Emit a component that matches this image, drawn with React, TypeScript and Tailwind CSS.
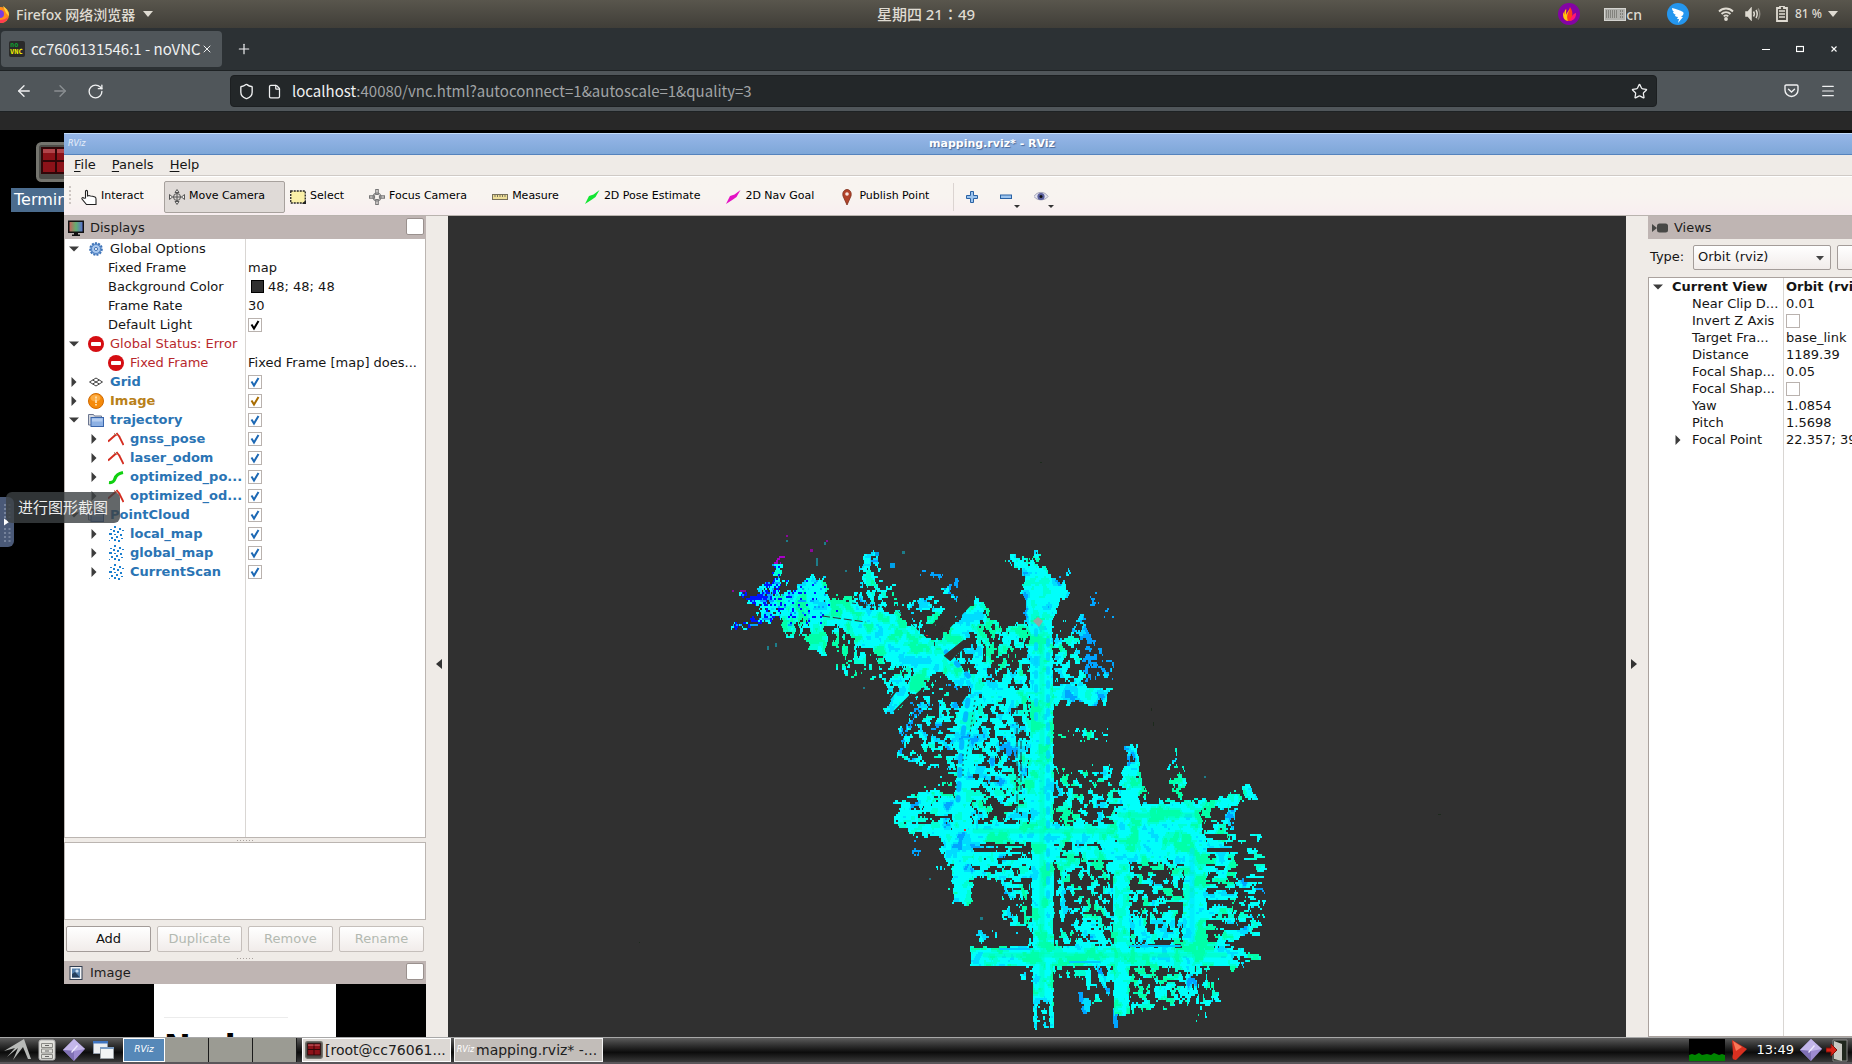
import React, { useMemo } from "react";
import { ArrowLeft, ArrowRight, RotateCw, Plus, X, Shield, File, Star, Menu } from "lucide-react";

const ui = "font-['Noto_Sans','Noto_Sans_CJK_SC',sans-serif]";
const web = "font-['Noto_Sans_CJK_SC',sans-serif]";
const qt = "font-['DejaVu_Sans',sans-serif]";

/* ---------- point cloud ---------- */

type Region = { p: number[]; d: number; tone?: number; sx?: number; sy?: number; warp?: number };

const regions: Region[] = [
  // north west road, running from the blue end to the main crossing
  { p: [776, 594, 787, 590, 812, 574, 826, 582, 828, 601, 853, 602, 896, 609, 928, 638, 948, 655, 977, 678, 1032, 688, 1032, 702, 990, 700, 960, 684, 940, 672, 916, 666, 886, 660, 866, 648, 842, 628, 800, 618, 776, 614], d: 0.95 },
  { p: [760, 586, 780, 580, 784, 616, 758, 622], d: 0.82, tone: 1, sx: 3, sy: 3 },
  { p: [788, 590, 812, 573, 825, 580, 827, 610, 788, 612], d: 0.82, tone: 1, sx: 3, sy: 3 },
  { p: [740, 592, 764, 596, 764, 606, 742, 600], d: 0.72, tone: 3, sx: 5, sy: 3 },
  { p: [764, 578, 786, 580, 782, 590, 764, 592], d: 0.62, tone: 3, sx: 3, sy: 3 },
  { p: [774, 556, 780, 556, 781, 584, 776, 584], d: 0.85, tone: 1, sx: 3, sy: 3 },
  { p: [727, 628, 740, 620, 770, 616, 770, 622, 740, 628], d: 0.6, tone: 3, sx: 5, sy: 2 },
  { p: [783, 610, 800, 614, 794, 632, 783, 637], d: 0.95, tone: 4 },
  { p: [808, 614, 826, 620, 826, 656, 810, 650], d: 0.95, tone: 4 },
  { p: [796, 612, 812, 620, 812, 642, 800, 636], d: 0.6, sx: 4, sy: 5, tone: 4 },
  { p: [826, 596, 860, 592, 858, 604, 828, 602], d: 0.6, sx: 7, sy: 3 },
  { p: [830, 622, 882, 632, 890, 655, 870, 678, 840, 672], d: 0.47, sx: 3, sy: 6, tone: 4 },
  { p: [858, 556, 878, 552, 880, 574, 876, 602, 860, 602, 858, 580], d: 0.64, tone: 1, sx: 4, sy: 4 },
  { p: [872, 578, 894, 582, 902, 606, 872, 604], d: 0.54, sx: 4, sy: 4, tone: 4 },
  { p: [866, 628, 915, 640, 930, 664, 900, 668, 874, 650], d: 0.8, sx: 4, sy: 7, tone: 4 },
  { p: [872, 656, 914, 658, 900, 680, 878, 674], d: 0.42, sx: 4, sy: 4 },
  // diagonal cross street
  { p: [976, 596, 988, 612, 962, 644, 942, 668, 914, 692, 902, 708, 884, 712, 898, 688, 924, 660, 936, 640], d: 0.95 },
  { p: [904, 608, 922, 596, 944, 600, 946, 606, 938, 622, 922, 632, 912, 620], d: 0.57, sx: 4, sy: 4 },
  { p: [922, 596, 944, 586, 962, 586, 950, 604, 938, 606], d: 0.45, tone: 1, sx: 4, sy: 4 },
  { p: [946, 578, 964, 578, 968, 590, 952, 600], d: 0.42, tone: 2, sx: 4, sy: 4 },
  { p: [922, 570, 942, 570, 938, 580, 924, 578], d: 0.38, tone: 2, sx: 4, sy: 3 },
  { p: [962, 640, 984, 612, 998, 620, 1002, 636, 972, 664, 950, 668], d: 0.62, sx: 3, sy: 5 },
  { p: [960, 656, 1028, 630, 1030, 690, 975, 680], d: 0.5, sx: 4, sy: 5 },
  { p: [996, 630, 1028, 622, 1030, 636, 1004, 644], d: 0.85, tone: 4 },
  { p: [884, 680, 912, 662, 922, 668, 892, 704], d: 0.6, sx: 3, sy: 4 },
  { p: [897, 742, 916, 706, 922, 706, 902, 744], d: 0.85, tone: 2 },
  // neighbourhood west of the main road
  { p: [920, 680, 960, 686, 966, 780, 944, 766, 896, 766, 900, 730], d: 0.5, tone: 1, sx: 4, sy: 4 },
  { p: [966, 690, 1030, 690, 1030, 800, 966, 800], d: 0.72, sx: 4, sy: 4, tone: 1 },
  { p: [968, 690, 980, 690, 972, 740, 972, 900, 954, 900, 954, 720], d: 0.96, tone: 1 },
  { p: [914, 790, 954, 772, 956, 806, 900, 806], d: 0.56, sx: 12, sy: 3 },
  { p: [892, 802, 940, 798, 960, 796, 960, 836, 916, 834, 894, 822], d: 0.8, sx: 8, sy: 3, tone: 1 },
  { p: [940, 826, 973, 826, 972, 902, 954, 902, 952, 866, 940, 850], d: 0.96 },
  { p: [913, 838, 918, 836, 918, 856, 912, 856], d: 0.4, tone: 2, sx: 3, sy: 3 },
  { p: [926, 842, 956, 858, 956, 892, 942, 876], d: 0.3, sx: 6, sy: 3 },
  { p: [972, 840, 1032, 840, 1032, 880, 1020, 905, 998, 880, 972, 875], d: 0.64, sx: 8, sy: 3, tone: 1 },
  { p: [974, 800, 1034, 796, 1034, 824, 974, 826], d: 0.53, sx: 5, sy: 4 },
  { p: [976, 872, 1030, 870, 1030, 908, 1000, 900], d: 0.32, sx: 3, sy: 5 },
  { p: [1000, 912, 1034, 900, 1034, 946, 1020, 934], d: 0.5, sx: 5, sy: 4 },
  { p: [978, 930, 994, 930, 994, 942, 980, 942], d: 0.5, sx: 4, sy: 4 },
  // northern head
  { p: [1020, 572, 1032, 562, 1046, 566, 1069, 590, 1052, 620, 1026, 620], d: 0.95, tone: 1 },
  { p: [1006, 556, 1018, 552, 1032, 558, 1026, 568, 1012, 568], d: 0.72, sx: 4, sy: 5 },
  { p: [1030, 550, 1042, 550, 1044, 558, 1032, 560], d: 0.8, sx: 4, sy: 4 },
  { p: [1058, 566, 1074, 572, 1072, 580, 1060, 572], d: 0.46, tone: 1, sx: 4, sy: 3 },
  { p: [1086, 594, 1098, 594, 1097, 604, 1086, 603], d: 0.6, tone: 2, sx: 4, sy: 4 },
  { p: [1100, 610, 1110, 610, 1110, 616, 1100, 616], d: 0.5, tone: 2, sx: 3, sy: 3 },
  // north to south road
  { p: [1028, 612, 1052, 612, 1053, 700, 1053, 1000, 1033, 1000, 1030, 800, 1030, 700], d: 1, warp: 2 },
  { p: [1033, 998, 1037, 998, 1037, 1026, 1033, 1026], d: 0.97, warp: 1 },
  { p: [1049, 998, 1053, 998, 1053, 1026, 1049, 1026], d: 0.97, warp: 1 },
  { p: [1036, 998, 1049, 998, 1049, 1026, 1036, 1026], d: 0.4, sx: 3, sy: 3 },
  // eastern stub
  { p: [1050, 684, 1076, 682, 1110, 690, 1104, 702, 1076, 701, 1050, 703], d: 0.95, tone: 1 },
  { p: [1052, 618, 1074, 624, 1080, 650, 1084, 684, 1052, 680], d: 0.53, sx: 4, sy: 5 },
  { p: [1072, 612, 1082, 614, 1100, 650, 1094, 654, 1076, 634], d: 0.5, tone: 2, sx: 4, sy: 4 },
  { p: [1082, 654, 1112, 650, 1112, 678, 1084, 680], d: 0.44, tone: 2, sx: 3, sy: 3 },
  { p: [1054, 726, 1110, 730, 1108, 742, 1056, 734], d: 0.42, sx: 4, sy: 3 },
  // grid of streets in the south east
  { p: [1053, 762, 1066, 772, 1110, 764, 1114, 800, 1114, 824, 1053, 824], d: 0.52, sx: 5, sy: 4 },
  { p: [970, 823, 1114, 824, 1114, 842, 970, 842], d: 1, warp: 2 },
  { p: [1113, 805, 1200, 801, 1207, 862, 1113, 860], d: 0.985 },
  { p: [1123, 763, 1138, 763, 1142, 806, 1122, 806], d: 0.96 },
  { p: [1126, 742, 1134, 742, 1138, 764, 1126, 764], d: 0.76, tone: 1, sx: 3, sy: 5 },
  { p: [1110, 790, 1146, 786, 1148, 806, 1112, 806], d: 0.7, sx: 5, sy: 4 },
  { p: [1168, 764, 1186, 766, 1184, 784, 1172, 804, 1168, 800], d: 0.6, sx: 4, sy: 5 },
  { p: [1168, 744, 1173, 744, 1173, 764, 1168, 764], d: 0.42, sx: 3, sy: 4 },
  { p: [1150, 802, 1182, 792, 1206, 798, 1210, 806, 1150, 808], d: 0.62, sx: 4, sy: 4 },
  { p: [1200, 802, 1238, 790, 1244, 802, 1222, 806, 1204, 816], d: 0.86, tone: 4 },
  { p: [1222, 806, 1234, 806, 1232, 826, 1224, 826], d: 0.75, tone: 1 },
  { p: [1241, 784, 1249, 782, 1256, 800, 1250, 800], d: 0.95 },
  { p: [1113, 840, 1129, 840, 1129, 1014, 1113, 1014], d: 0.95, tone: 4, warp: 2 },
  { p: [1183, 840, 1206, 840, 1206, 962, 1183, 962], d: 0.98, warp: 3 },
  { p: [1053, 842, 1114, 842, 1114, 868, 1053, 868], d: 0.78, sx: 5, sy: 4 },
  { p: [1053, 868, 1114, 868, 1114, 948, 1053, 948], d: 0.5, sx: 4, sy: 4 },
  { p: [1060, 868, 1064, 868, 1064, 920, 1060, 920], d: 0.95, warp: 1 },
  { p: [1078, 916, 1104, 916, 1104, 946, 1078, 946], d: 0.9, tone: 1 },
  { p: [1129, 860, 1184, 860, 1184, 912, 1129, 912], d: 0.52, sx: 5, sy: 3 },
  { p: [1129, 912, 1184, 912, 1184, 948, 1129, 948], d: 0.74, sx: 4, sy: 5 },
  { p: [1205, 816, 1232, 830, 1238, 940, 1205, 948], d: 0.64, sx: 10, sy: 3 },
  { p: [1232, 832, 1258, 832, 1264, 880, 1260, 910, 1236, 900], d: 0.44, tone: 1, sx: 9, sy: 3 },
  { p: [1236, 900, 1262, 910, 1258, 938, 1236, 938], d: 0.36, tone: 1, sx: 8, sy: 3 },
  { p: [970, 946, 1233, 946, 1233, 965, 970, 965], d: 0.98, warp: 2 },
  { p: [1228, 946, 1260, 950, 1256, 962, 1228, 968], d: 0.62, sx: 8, sy: 3 },
  { p: [1018, 964, 1034, 964, 1034, 980, 1020, 978], d: 0.4, sx: 4, sy: 3 },
  { p: [1053, 964, 1115, 964, 1112, 1000, 1086, 1010, 1078, 980, 1053, 974], d: 0.52, tone: 1, sx: 4, sy: 6 },
  { p: [1129, 964, 1196, 964, 1192, 1004, 1132, 1012], d: 0.53, sx: 4, sy: 4 },
  { p: [1186, 960, 1194, 960, 1195, 994, 1180, 998], d: 0.9, tone: 1 },
  { p: [1196, 964, 1222, 966, 1218, 980, 1204, 1016, 1196, 1016], d: 0.34, sx: 3, sy: 6 },
  { p: [1210, 986, 1219, 992, 1220, 1001, 1213, 998], d: 0.95, tone: 1 },
  { p: [1112, 1008, 1117, 1008, 1117, 1027, 1113, 1027], d: 0.95, tone: 2, warp: 1 },
  { p: [1081, 994, 1089, 994, 1089, 1012, 1083, 1012], d: 0.85, tone: 2 },
  { p: [1014, 740, 1034, 740, 1034, 822, 1014, 822], d: 0.62, sx: 3, sy: 16 },
];

function hash(x: number, y: number, s: number) {
  let h = (x * 374761393 + y * 668265263 + s * 982451653) | 0;
  h = Math.imul(h ^ (h >>> 13), 1274126177);
  return ((h ^ (h >>> 16)) >>> 0) / 4294967296;
}

function noise(x: number, y: number, s: number) {
  const xi = Math.floor(x);
  const yi = Math.floor(y);
  const fx = x - xi;
  const fy = y - yi;
  const u = fx * fx * (3 - 2 * fx);
  const v = fy * fy * (3 - 2 * fy);
  const a = hash(xi, yi, s) * (1 - u) + hash(xi + 1, yi, s) * u;
  const b = hash(xi, yi + 1, s) * (1 - u) + hash(xi + 1, yi + 1, s) * u;
  return a * (1 - v) + b * v;
}

function inside(p: number[], x: number, y: number) {
  let r = false;
  for (let i = 0, j = p.length - 2; i < p.length; j = i, i += 2) {
    if (p[i + 1] > y !== p[j + 1] > y && x < ((p[j] - p[i]) * (y - p[i + 1])) / (p[j + 1] - p[i + 1]) + p[i]) r = !r;
  }
  return r;
}

const palette = ["#00ffa8", "#00ffd2", "#00fffb", "#00dcff", "#00a4ff", "#0014ff", "#a800c8"];

function pickColour(tone: number, t: number) {
  if (tone === 0) return t < 0.36 ? 0 : t < 0.46 ? 1 : t < 0.7 ? 2 : 3;
  if (tone === 1) return t < 0.32 ? 1 : t < 0.6 ? 2 : t < 0.71 ? 3 : 4;
  if (tone === 2) return t < 0.34 ? 3 : 4;
  if (tone === 4) return t < 0.42 ? 0 : t < 0.56 ? 1 : 2;
  return t < 0.42 ? 5 : t < 0.6 ? 2 : 5;
}

function buildCloud() {
  const paths = palette.map(() => [] as string[]);
  const boxes = regions.map(({ p }) => {
    const xs = p.filter((_, i) => i % 2 === 0);
    const ys = p.filter((_, i) => i % 2 === 1);
    return [Math.min(...xs) - 6, Math.min(...ys) - 6, Math.max(...xs) + 6, Math.max(...ys) + 6];
  });
  const h = 2;
  for (let y = 544; y < 1030; y += h) {
    let run = -1;
    let start = 0;
    for (let x = 720; x <= 1270; x++) {
      let c = -1;
      const nx = noise(x / 4, y / 4, 11) - 0.5;
      const ny = noise(x / 4, y / 4, 23) - 0.5;
      for (let i = 0; i < regions.length; i++) {
        const b = boxes[i];
        if (x < b[0] || x > b[2] || y < b[1] || y > b[3]) continue;
        const g = regions[i];
        const w = g.warp ?? 9;
        if (!inside(g.p, x + nx * w, y + ny * w)) continue;
        if (g.d < 0.94) {
          const n = 0.82 * noise(x / (g.sx ?? 4), y / (g.sy ?? 4), 5) + 0.18 * hash(x >> 1, y, 9);
          if (n > 0.09 + g.d * 0.73) continue;
        }
        const t = noise(x / 11, y / 11, 41) * 0.65 + noise(x / 4, y / 4, 43) * 0.35;
        let k = pickColour(g.tone ?? 0, t);
        if (x < 840 && y < 625 && hash(x >> 1, y, 77) < (840 - x) / 260) k = y % 3 === 0 ? 4 : 5;
        if (y < 564 && x < 790) k = 6;
        c = k;
        if (g.d > 0.9) break;
      }
      if (c !== run || x >= 1270) {
        if (run >= 0) paths[run].push(`M${start} ${y}h${x - start}v${h}h${start - x}z`);
        run = c;
        start = x;
      }
    }
  }
  return paths.map((p) => p.join(""));
}

function PointCloud() {
  const paths = useMemo(buildCloud, []);
  return (
    <svg className="absolute inset-0 h-full w-full" viewBox="448 216 1178 821" preserveAspectRatio="xMidYMid slice" role="img" aria-label="Point cloud map">
      {paths.map((d, i) => (
        <path key={i} d={d} fill={palette[i]} />
      ))}
      <g fill="none" strokeLinecap="round">
        <path d="M1042 625V995" stroke="#00ffb0" strokeWidth="5" opacity=".5" />
        <path d="M1048 640V900M1036 630V720" stroke="#00d2ff" strokeWidth="4" strokeDasharray="5 9" opacity=".8" />
        <path d="M975 831H1110M1120 815H1195M985 955H1225" stroke="#00ffac" strokeWidth="5" opacity=".5" />
        <path d="M1192 850V940" stroke="#00e0ff" strokeWidth="5" opacity=".5" />
        <path d="M1070 962H1100M1130 946H1180M1000 949H1030" stroke="#00c8ff" strokeWidth="2" />
        <path d="M968 700L962 740L958 800" stroke="#00baff" strokeWidth="5" strokeDasharray="6 8" />
        <path d="M946 652L972 680" stroke="#00b4ff" strokeWidth="5" strokeDasharray="3 12" />
      </g>
      <g fill="none" stroke="#303030" strokeWidth="1">
        <path d="M852 603L896 609L926 637" strokeDasharray="4 2" />
        <path d="M975 700L966 760M963 754V778" strokeDasharray="2 3" />
        <path d="M1017 706V816M1021 730V790M822 616L866 622" strokeDasharray="8 3" />
        <path d="M954 690L968 693L962 702L954 700Z" fill="#303030" />
        <path d="M936 626L966 596M946 630L972 602" strokeWidth="3" />
        <path d="M924 634L938 620M932 638L944 626" strokeWidth="2" />
        <path d="M944 656L964 640L968 644L950 661" fill="#303030" />
        <path d="M902 708L924 688M886 704L898 688M894 712L912 694" strokeWidth="2" />
      </g>
      <path d="M1033 621l5-4 5 4-4 6z" fill="#94a8a4" />
      <path d="M964 829h2v2h-2zM926 635h2v1h-2z" fill="#f02020" />
      <g fill="#1d7d8a">
        <path d="M786 540h2v2h-2zM824 542h2v3h-2zM767 646h2v4h-2zM775 643h2v4h-2zM816 558h2v8h-2zM863 687h2v2h-2zM902 551h3v3h-3zM845 570h2v2h-2zM929 878h2v2h-2zM980 917h3v3h-3zM1204 776h2v2h-2z" />
      </g>
      <path d="M786 535h2v2h-2zM826 540h2v2h-2zM810 549h3v3h-3zM740 590h6v2h-6zM732 590h2v2h-2z" fill="#8a0a9a" />
      <path d="M890 563h5v5h-5zM875 552h4v4h-4z" fill="#00a0e8" />
      <path d="M1040 462h2v1h-2zM1151 708h1v3h-1zM1153 722h1v4h-1zM1438 814h3v1h-3zM639 942h1v1h-1z" fill="#1c2a1c" />
    </svg>
  );
}

/* ---------- small icons ---------- */

const Tri = ({ open }: { open?: boolean }) => (
  <svg width="10" height="10" viewBox="0 0 10 10" fill="#3c3c3c" aria-hidden="true">
    {open ? <path d="M0 2.500h10L5 7.500z" /> : <path d="M2.500 0v10l5-5z" />}
  </svg>
);

const icons: Record<string, React.ReactNode> = {
  gear: (
    <g>
      <circle cx="8" cy="8" r="5.800" fill="#7fa9dc" stroke="#3f74b8" strokeWidth="2" strokeDasharray="2 1.200" />
      <circle cx="8" cy="8" r="4.500" fill="#a9c8ee" stroke="#5585c4" />
      <circle cx="8" cy="8" r="1.600" fill="#e8f1fb" stroke="#4878b8" />
    </g>
  ),
  stop: (
    <g>
      <circle cx="8" cy="8" r="8" fill="#d50d12" />
      <rect x="3" y="6" width="10" height="4" rx="1" fill="#fff" />
    </g>
  ),
  grid: (
    <g fill="none" stroke="#444" strokeWidth="1">
      <path d="M1.500 8L8 4l6.500 4L8 12zM4.700 6l6.600 4M11.300 6L4.700 10" />
    </g>
  ),
  warn: (
    <g>
      <circle cx="8" cy="8" r="7.500" fill="#f58a0a" stroke="#d06a00" />
      <ellipse cx="7.500" cy="5" rx="5" ry="3.500" fill="#ffb95a" opacity=".7" />
      <path d="M7 3.500h2v2H7zM7 6.500h2V10H7zM7 11h2v1.500H7z" fill="#ffd9a0" />
    </g>
  ),
  folder: (
    <g>
      <path d="M.5 13V2.500h5l1 1.500h7V13z" fill="#d5d8de" stroke="#6b7690" />
      <rect x="3" y="5.500" width="12.500" height="9" fill="#8db1e4" stroke="#3a66ac" />
      <path d="M4 6.500h10.500v3H4z" fill="#b4cdf0" />
    </g>
  ),
  odom: (
    <g fill="none" stroke="#d42b1e" strokeWidth="2">
      <path d="M0 10.500L8 3.500" />
      <path d="M8.500 2l3.500 4.500M11 5l4.500 9" strokeWidth="1.800" />
      <path d="M6 2.500l3 2" stroke="#9c6a50" strokeWidth="1" />
    </g>
  ),
  path: <path d="M1 13.500c4 .5 5-1 6-4s3-5 8-6" fill="none" stroke="#10d010" strokeWidth="3.200" />,
  cloud: (
    <g fill="#1b7fd0">
      <path d="M6 0h2v2H6zM11 2h2v2h-2zM2 3h2v1H2zM5 4h2v2H5zM9 5h2v2H9zM14 4h2v1h-2zM1 7h3v2H1zM6 8h2v1H6zM12 8h2v2h-2zM3 11h2v2H3zM8 10h2v2H8zM13 12h2v1h-2zM6 13h2v2H6zM10 14h2v2h-2zM1 14h1v1H1z" />
    </g>
  ),
};

const Icon = ({ name }: { name: string }) => (
  <svg width="16" height="16" viewBox="0 0 16 16" className="shrink-0" aria-hidden="true">
    {icons[name]}
  </svg>
);

function Check({ label, color, checked }: { label: string; color: string; checked: boolean }) {
  return (
    <span className="relative inline-flex h-3.5 w-3.5">
      <input type="checkbox" defaultChecked={checked} aria-label={label} className="h-3.5 w-3.5 appearance-none border border-[#b9b2ae] bg-white" />
      {checked && (
        <svg viewBox="0 0 14 14" className={`pointer-events-none absolute inset-0 ${color}`} fill="none" stroke="currentColor" strokeWidth="2" aria-hidden="true">
          <path d="M3.500 6.500L6 10.500 10.500 3" />
        </svg>
      )}
    </span>
  );
}

/* ---------- displays tree ---------- */

type Row = { label: string; level: number; arrow?: "open" | "closed"; icon?: string; cls?: string; value?: React.ReactNode; check?: string };

const blue = "font-bold text-[#2a74b4]";
const rows: Row[] = [
  { label: "Global Options", level: 0, arrow: "open", icon: "gear" },
  { label: "Fixed Frame", level: 1, value: "map" },
  {
    label: "Background Color",
    level: 1,
    value: (
      <span className="flex items-center gap-1 pl-[3px]">
        <span className="h-[13px] w-[13px] border border-black bg-[#303030]" />
        48; 48; 48
      </span>
    ),
  },
  { label: "Frame Rate", level: 1, value: "30" },
  { label: "Default Light", level: 1, check: "text-black" },
  { label: "Global Status: Error", level: 0, arrow: "open", icon: "stop", cls: "text-[#b8282c]" },
  { label: "Fixed Frame", level: 1, icon: "stop", cls: "text-[#b8282c]", value: "Fixed Frame [map] does..." },
  { label: "Grid", level: 0, arrow: "closed", icon: "grid", cls: blue, check: "text-[#1c68b4]" },
  { label: "Image", level: 0, arrow: "closed", icon: "warn", cls: "font-bold text-[#b9811a]", check: "text-[#a86c00]" },
  { label: "trajectory", level: 0, arrow: "open", icon: "folder", cls: blue, check: "text-[#1c68b4]" },
  { label: "gnss_pose", level: 1, arrow: "closed", icon: "odom", cls: blue, check: "text-[#1c68b4]" },
  { label: "laser_odom", level: 1, arrow: "closed", icon: "odom", cls: blue, check: "text-[#1c68b4]" },
  { label: "optimized_po...", level: 1, arrow: "closed", icon: "path", cls: blue, check: "text-[#1c68b4]" },
  { label: "optimized_od...", level: 1, arrow: "closed", icon: "odom", cls: blue, check: "text-[#1c68b4]" },
  { label: "PointCloud", level: 0, arrow: "open", icon: "folder", cls: blue, check: "text-[#1c68b4]" },
  { label: "local_map", level: 1, arrow: "closed", icon: "cloud", cls: blue, check: "text-[#1c68b4]" },
  { label: "global_map", level: 1, arrow: "closed", icon: "cloud", cls: blue, check: "text-[#1c68b4]" },
  { label: "CurrentScan", level: 1, arrow: "closed", icon: "cloud", cls: blue, check: "text-[#1c68b4]" },
];

function DisplayRow({ r }: { r: Row }) {
  return (
    <li className="flex h-[19px] items-center whitespace-nowrap text-[13px]">
      <span className={`flex w-[181px] shrink-0 items-center ${r.level ? "pl-5" : ""}`}>
        <span className="mr-[5px] flex w-[18px] justify-center">{r.arrow && <Tri open={r.arrow === "open"} />}</span>
        {r.icon && (
          <span className="mr-1.5 flex">
            <Icon name={r.icon} />
          </span>
        )}
        <span className={r.cls ?? "text-[#151515]"}>{r.label}</span>
      </span>
      <span className="flex items-center pl-0.5 text-[#151515]">{r.check ? <Check label={r.label} color={r.check} checked /> : r.value}</span>
    </li>
  );
}

function DockTitle({ icon, title, float = true }: { icon: React.ReactNode; title: string; float?: boolean }) {
  return (
    <header className="flex h-[23px] shrink-0 items-center bg-[#bfb5b3] pr-0.5 pl-1 text-[13px] text-[#1c1c1c]">
      <svg width="16" height="16" viewBox="0 0 16 16" className="mr-1.5" aria-hidden="true">
        {icon}
      </svg>
      <h2 className="grow">{title}</h2>
      {float && <button aria-label={`Float ${title}`} className="mb-0.5 h-[17px] w-[18px] rounded-xs border border-[#9a918e] bg-white" />}
    </header>
  );
}

const Grip = () => (
  <svg width="16" height="3" viewBox="0 0 16 3" fill="#a9a29e" className="mx-auto" aria-hidden="true">
    <path d="M0 1h1v1H0zM3 1h1v1H3zM6 1h1v1H6zM9 1h1v1H9zM12 1h1v1h-1zM15 1h1v1h-1z" />
  </svg>
);

function DisplaysDock() {
  return (
    <aside className="flex w-[362px] shrink-0 flex-col bg-[#efebe7]">
      <DockTitle
        title="Displays"
        icon={
          <g>
            <defs>
              <linearGradient id="mon">
                <stop offset="0" stopColor="#d05858" />
                <stop offset=".5" stopColor="#62b070" />
                <stop offset="1" stopColor="#5a6ad8" />
              </linearGradient>
            </defs>
            <rect x=".750" y="1.250" width="14.500" height="11" fill="url(#mon)" stroke="#111" strokeWidth="1.500" />
            <path d="M6 13h4v1.500h2V16H4v-1.500h2z" fill="#111" />
          </g>
        }
      />
      <div className="flex min-h-0 flex-1 overflow-hidden border-r border-b border-l border-[#bbb5b1] bg-white bg-[linear-gradient(90deg,transparent_180px,#d9d6d3_180px,#d9d6d3_181px,transparent_181px)]">
        <ul>
          {rows.map((r, i) => (
            <DisplayRow key={i} r={r} />
          ))}
        </ul>
      </div>
      <div className="flex h-1 items-center">
        <Grip />
      </div>
      <div className="h-[78px] shrink-0 border border-[#bbb5b1] bg-white" />
      <div className="grid grid-cols-4 gap-1.5 px-0.5 pt-1.5 pb-1">
        {["Add", "Duplicate", "Remove", "Rename"].map((t, i) => (
          <button
            key={t}
            disabled={i > 0}
            className="h-[26px] rounded-xs border border-[#a39c99] bg-linear-to-b from-white to-[#f1ecea] text-[13px] text-[#111] disabled:border-[#c5bfbb] disabled:text-[#b3b9b1]"
          >
            {t}
          </button>
        ))}
      </div>
      <div className="flex h-[5px] items-center">
        <Grip />
      </div>
      <DockTitle
        title="Image"
        icon={
          <g>
            <rect x="2" y="1.500" width="12" height="13" fill="#f4f6f8" stroke="#333e50" />
            <rect x="4" y="3.500" width="8" height="9" fill="#5580ac" />
            <path d="M4 12.500V9l3-2 5 5.500z" fill="#26405e" />
            <circle cx="9" cy="6" r="1.600" fill="#c8dcf0" />
          </g>
        }
      />
      <div className="flex h-[53px] shrink-0 justify-center bg-black">
        <div className="w-[182px] overflow-hidden bg-white pl-2.5">
          <div className="h-[34px] w-[124px] border-b border-[#ececec]" />
          <p className="pt-3 text-[32px] leading-8 font-bold text-black">Nod</p>
        </div>
      </div>
    </aside>
  );
}

/* ---------- views dock ---------- */

const views: [string, React.ReactNode][] = [
  ["Near Clip D...", "0.01"],
  ["Invert Z Axis", false],
  ["Target Fra...", "base_link"],
  ["Distance", "1189.39"],
  ["Focal Shap...", "0.05"],
  ["Focal Shap...", false],
  ["Yaw", "1.0854"],
  ["Pitch", "1.5698"],
  ["Focal Point", "22.357; 39.18; -1.2"],
];

function ViewsDock() {
  return (
    <aside className="flex w-[272px] shrink-0 flex-col bg-[#efebe7] text-[13px] text-[#151515]">
      <DockTitle
        title="Views"
        float={false}
        icon={
          <g fill="#484846">
            <path d="M0 4l5 4-5 4z" />
            <rect x="5" y="3.500" width="11" height="9" rx="2.500" />
          </g>
        }
      />
      <div className="flex h-[38px] shrink-0 items-center pb-0.5 pl-0.5">
        <label htmlFor="viewtype" className="w-[43px]">
          Type:
        </label>
        <div className="relative mr-1.5 w-[138px]">
          <select id="viewtype" className="h-[25px] w-full appearance-none rounded-xs border border-[#a39c99] bg-linear-to-b from-white to-[#f1ecea] pl-1">
            <option>Orbit (rviz)</option>
          </select>
          <svg width="8" height="5" viewBox="0 0 8 5" fill="#444" className="pointer-events-none absolute top-[11px] right-[7px]" aria-hidden="true">
            <path d="M0 0h8L4 4.500z" />
          </svg>
        </div>
        <button aria-label="Zero" className="h-[25px] w-16 rounded-xs border border-[#a39c99] bg-linear-to-b from-white to-[#f1ecea]" />
      </div>
      <ul className="min-h-0 flex-1 border border-[#aaa29e] bg-white bg-[linear-gradient(90deg,transparent_134px,#d9d6d3_134px,#d9d6d3_135px,transparent_135px)] whitespace-nowrap">
        <li className="flex h-[17px] items-center font-bold">
          <span className="mr-[5px] flex w-[18px] justify-center">
            <Tri open />
          </span>
          <span className="w-[114px]">Current View</span>
          <span>Orbit (rviz)</span>
        </li>
        {views.map(([k, v], i) => (
          <li key={i} className="flex h-[17px] items-center pl-5">
            <span className="mr-[5px] flex w-[18px] justify-center">{k === "Focal Point" && <Tri />}</span>
            <span className="w-[94px]">{k}</span>
            {v === false ? <Check label={k} color="text-black" checked={false} /> : <span>{v}</span>}
          </li>
        ))}
      </ul>
    </aside>
  );
}

/* ---------- rviz toolbar ---------- */

const Cam = (
  <g fill="#f2f0ee" stroke="#555" strokeWidth="1">
    <path d="M8 .5l2 3H6zM8 15.500l2-3H6zM.5 5.500v5l3-2.500zM15.500 5.500v5l-3-2.500z" />
    <circle cx="8" cy="8" r="3.500" fill="none" />
    <path d="M3.500 8h9M8 3.500v9" />
  </g>
);
const tools: [string, React.ReactNode][] = [
  ["Interact", <path d="M4.500 9V2.500c0-1.500 2-1.500 2 0V7l1.500-.5L9.500 7l2 .2 2.500.8c1 .5 1 1 1 2v5.500H5.500L1 10c-.5-1.500 1-1.800 2-.8z" fill="#fff" stroke="#222" strokeWidth="1.100" />],
  ["Move Camera", Cam],
  [
    "Select",
    <g>
      <rect x=".750" y="2" width="14.500" height="12" fill="#faf0a8" stroke="#222" strokeWidth="1.300" strokeDasharray="2 1" />
      <path d="M16 11v4h-4z" fill="#222" />
    </g>,
  ],
  [
    "Focus Camera",
    <g fill="none" stroke="#777" strokeWidth="1.200">
      <circle cx="8" cy="8" r="4" />
      <path d="M6.800.5h2.400v5H6.800zM6.800 10.500h2.400v5H6.800zM.5 6.800h5v2.400h-5zM10.500 6.800h5v2.400h-5z" />
    </g>,
  ],
  [
    "Measure",
    <g>
      <rect x=".5" y="5.500" width="15" height="5" fill="#efdf98" stroke="#77705a" />
      <path d="M3 6v2M5.500 6v2M8 6v2M10.500 6v2M13 6v2" stroke="#77705a" />
    </g>,
  ],
  ["2D Pose Estimate", <path d="M1 15l4-8 4.500-1.500L15.500 1 11.500 8 8 10.500z" fill="#12e632" />],
  ["2D Nav Goal", <path d="M1 15l4-8 4.500-1.500L15.500 1 11.500 8 8 10.500z" fill="#e412c4" />],
  [
    "Publish Point",
    <g>
      <path d="M8 16L4 7C3 3 5.500.5 8 .5S13 3 12 7z" fill="#b2432a" stroke="#7c2c18" strokeWidth=".8" />
      <circle cx="8" cy="5" r="1.800" fill="#f6e6e0" />
    </g>,
  ],
];

function RvizWindow() {
  return (
    <section aria-label="RViz" className={`-mr-[68px] ml-16 flex min-h-0 flex-1 flex-col overflow-hidden bg-[#efebe7] ${qt}`}>
      <header className="flex h-[22px] shrink-0 items-center border-t border-b border-t-[#c2dcfa] border-b-[#5583bd] bg-linear-to-b from-[#96b6e8] to-[#7ea7d8] px-1">
        <span className="w-8 text-[8px] text-white/80 italic">RViz</span>
        <h1 className="grow pr-8 text-center text-[11px] font-bold text-white [text-shadow:1px_1px_1px_#4a6a9a]">mapping.rviz* - RViz</h1>
      </header>
      <nav className="flex h-[21px] shrink-0 items-center gap-4 border-b border-[#cfcac6] px-2.5 text-[13px] text-[#151515]">
        {["File", "Panels", "Help"].map((m) => (
          <button key={m}>
            <span className="underline underline-offset-2">{m[0]}</span>
            {m.slice(1)}
          </button>
        ))}
      </nav>
      <div className="flex h-10 shrink-0 items-center border-t border-b border-t-white border-b-[#b9b3ae] bg-linear-to-b from-[#f8f4f0] from-50% to-[#f8eef0] pt-px pl-[5px] text-[11px] whitespace-nowrap text-black">
        <svg width="7" height="22" viewBox="0 0 7 22" fill="#cdc6c2" aria-hidden="true">
          <path d="M0 0h2v2H0zM0 4h2v2H0zM0 8h2v2H0zM0 12h2v2H0zM0 16h2v2H0z" />
        </svg>
        {tools.map(([t, ic]) => (
          <button
            key={t}
            aria-pressed={t === "Move Camera"}
            className="flex h-8 items-center gap-1 rounded-xs border border-transparent pr-[19px] pl-1 aria-pressed:border-[#a7a19d] aria-pressed:bg-[#dfdad7]"
          >
            <svg width="16" height="16" viewBox="0 0 16 16" aria-hidden="true">
              {ic}
            </svg>
            {t}
          </button>
        ))}
        <span className="mr-3 ml-1 h-7 w-px bg-[#dbd4d1]" />
        <button aria-label="Add tool" className="mr-[22px]">
          <svg width="12" height="12" viewBox="0 0 12 12" aria-hidden="true">
            <path d="M4.500.5h3v4h4v3h-4v4h-3v-4h-4v-3h4z" fill="#9cc4ee" stroke="#2a62a4" />
          </svg>
        </button>
        <button aria-label="Remove tool" className="mr-3.5 flex items-end">
          <svg width="20" height="22" viewBox="0 0 20 22" aria-hidden="true">
            <rect x=".5" y="9" width="11" height="3.500" fill="#9cc4ee" stroke="#2a62a4" />
            <path d="M14 19h6l-3 3z" fill="#333" />
          </svg>
        </button>
        <button aria-label="Tool visibility">
          <svg width="20" height="22" viewBox="0 0 20 22" aria-hidden="true">
            <path d="M0 10.500C3 5 11 5 14 10.500 11 15 3 15 0 10.500z" fill="#e4e4ee" stroke="#a6a6ba" />
            <circle cx="7" cy="10.500" r="3.600" fill="#5a5f9c" />
            <circle cx="7" cy="10.500" r="1.500" fill="#111" />
            <path d="M14 19h6l-3 3z" fill="#333" />
          </svg>
        </button>
      </div>
      <div className="flex min-h-0 flex-1">
        <DisplaysDock />
        <button aria-label="Collapse left panel" className="flex w-[22px] shrink-0 items-center justify-center pt-[74px] pl-1">
          <svg width="6" height="10" viewBox="0 0 6 10" fill="#333" aria-hidden="true">
            <path d="M6 0v10L0 5z" />
          </svg>
        </button>
        <main className="relative min-w-0 flex-1 overflow-hidden bg-[#303030]">
          <PointCloud />
        </main>
        <button aria-label="Collapse right panel" className="flex w-[22px] shrink-0 items-center pt-[74px] pl-[5px]">
          <svg width="6" height="10" viewBox="0 0 6 10" fill="#333" aria-hidden="true">
            <path d="M0 0v10l6-5z" />
          </svg>
        </button>
        <ViewsDock />
      </div>
    </section>
  );
}

/* ---------- desktop chrome ---------- */

function TopBar() {
  return (
    <header className={`grid h-7 shrink-0 grid-cols-[1fr_auto_1fr] items-center bg-linear-to-b from-[#59564d] to-[#403e38] text-[14px] font-medium text-[#dfdbd2] ${ui}`}>
      <button className="flex items-center">
        <svg width="10" height="18" viewBox="0 0 10 18" className="mr-1.5" aria-hidden="true">
          <circle cx="1" cy="10" r="8" fill="#ff8a1c" />
          <path d="M3 1c3 2 6 5 6 10l-3-3z" fill="#ffd23c" />
          <path d="M0 18c4 0 7-2 8-6-2 2-5 3-8 3z" fill="#ff3c50" />
          <circle cx="0" cy="9" r="4" fill="#7a3ce0" />
        </svg>
        Firefox 网络浏览器
        <svg width="10" height="6" viewBox="0 0 10 6" fill="#dfdbd2" className="ml-2" aria-hidden="true">
          <path d="M0 0h10L5 6z" />
        </svg>
      </button>
      <time className="font-['Noto_Sans','Noto_Sans_CJK_TC',sans-serif] text-[15px] leading-5">星期四 21：49</time>
      <div className="flex items-center justify-end pr-3.5 text-[13px]">
        <svg width="22" height="22" viewBox="0 0 22 22" className="mr-6" aria-hidden="true">
          <circle cx="11" cy="11" r="11" fill="#8404a4" />
          <path d="M5 9c0 6 1 9 6 9 4 0 6-3 7-8-2 1-3 2-4 3 1-3 0-6-2-9-1 3-2 5-3 8-1-1-1-3 0-6-3 2-3 4-3 6z" fill="#ff3c1e" />
          <path d="M5 9c0 6 1 8 5 9-2-5 0-8 2-12-2 2-3 4-4 6V6C6 8 6.500 10 6.500 12z" fill="#ffc810" />
          <path d="M18 10c-3 1-5 4-6 8 4-1 6-3 6-8z" fill="#ff1478" />
        </svg>
        <svg width="22" height="13" viewBox="0 0 22 13" aria-hidden="true">
          <rect x=".5" y=".5" width="21" height="12" fill="#b0b0ac" stroke="#d4d4d0" />
          <path d="M2 3h12M2 5h12M2 7h12M2 9h12M16 3h4M16 6h4M16 9h4" stroke="#55554f" strokeDasharray="1 1" />
        </svg>
        <span className="mr-[25px] text-[14px]">cn</span>
        <svg width="22" height="22" viewBox="0 0 22 22" className="mr-[29px]" aria-hidden="true">
          <circle cx="11" cy="11" r="11" fill="#2496ee" />
          <path d="M5 5c4 1 8 2 11 4 1 1 .5 2 0 3l-2 2h2l-5 6 1-4h-2l1-2c-2 0-3-1-3-2h1c-2-1-3-2-3-3h1c-1-1-2-2-2-4z" fill="#fff" />
        </svg>
        <svg width="16" height="14" viewBox="0 0 16 14" fill="none" stroke="#dfdbd2" strokeWidth="1.800" className="mr-[11px]" aria-hidden="true">
          <path d="M1 4.500c4-4 10-4 14 0M3.500 7c2.500-2.500 6.500-2.500 9 0M5.700 9.300c1.300-1.300 3.300-1.300 4.600 0" />
          <circle cx="8" cy="12" r="1" fill="#dfdbd2" />
        </svg>
        <svg width="16" height="14" viewBox="0 0 16 14" fill="none" stroke="#dfdbd2" strokeWidth="1.500" className="mr-[15px]" aria-hidden="true">
          <path d="M1 5h2l3-3.500v11L3 9H1z" fill="#dfdbd2" />
          <path d="M8.500 4.500c1 1.500 1 3.500 0 5M11 3c1.500 2.500 1.500 5.500 0 8" />
          <path d="M13 1.500c2.200 3.500 2.200 7.500 0 11" stroke="#8a877e" />
        </svg>
        <svg width="12" height="16" viewBox="0 0 12 16" className="mr-[7px]" aria-hidden="true">
          <path d="M4 0h4v2h3v13H1V2h3z" fill="none" stroke="#dfdbd2" strokeWidth="1.800" />
          <path d="M3 5h6M3 8h6M3 11h6" stroke="#dfdbd2" strokeWidth="1.500" />
        </svg>
        <span className="mr-1.5 text-[12px]">81 %</span>
        <svg width="10" height="6" viewBox="0 0 10 6" fill="#dfdbd2" aria-hidden="true">
          <path d="M0 0h10L5 6z" />
        </svg>
      </div>
    </header>
  );
}

function Browser() {
  return (
    <div className={web}>
      <div className="flex h-[43px] items-center border-b border-[#1e2224] bg-[#2c3134] pl-px text-[#eff0f1]">
        <div role="tab" aria-selected="true" className="flex h-9 w-[221px] items-center rounded bg-[#50565a] pl-2">
          <span className="mr-1.5 flex h-4 w-4 shrink-0 flex-col justify-center rounded-xs bg-[#2a2a2a] font-['DejaVu_Sans_Mono',monospace] text-[7px] leading-[7px] font-bold">
            <span className="pl-px text-[#0ea030]">no</span>
            <span className="pl-px text-[#f0f000]">VNC</span>
          </span>
          <span className="grow text-[15px] whitespace-nowrap">cc7606131546:1 - noVNC</span>
          <button aria-label="Close tab" className="mr-2.5">
            <X size={12} strokeWidth={2} />
          </button>
        </div>
        <button aria-label="New tab" className="ml-3.5">
          <Plus size={16} strokeWidth={1.8} />
        </button>
        <span className="grow" />
        <div className="flex items-center gap-[26px] pr-3.5">
          <button aria-label="Minimize">
            <svg width="8" height="8" viewBox="0 0 8 8" aria-hidden="true">
              <path d="M0 4.500h8" stroke="#fff" strokeWidth="1" />
            </svg>
          </button>
          <button aria-label="Maximize">
            <svg width="8" height="8" viewBox="0 0 8 8" aria-hidden="true">
              <rect x=".5" y="1.500" width="7" height="5" fill="none" stroke="#fff" strokeWidth="1.200" />
            </svg>
          </button>
          <button aria-label="Close">
            <svg width="8" height="8" viewBox="0 0 8 8" aria-hidden="true">
              <path d="M1.500 1.500l5 5M6.500 1.500l-5 5" stroke="#fff" strokeWidth="1.100" />
            </svg>
          </button>
        </div>
      </div>
      <div className="flex h-10 items-center bg-[#50565a] pl-[15px] text-[#eff0f1]">
        <button aria-label="Back" className="mr-[18px]">
          <ArrowLeft size={18} strokeWidth={1.8} />
        </button>
        <button aria-label="Forward" className="mr-[18px] text-[#8a8f92]">
          <ArrowRight size={18} strokeWidth={1.8} />
        </button>
        <button aria-label="Reload">
          <RotateCw size={17} strokeWidth={1.9} />
        </button>
        <div className="mr-[127px] ml-[126px] flex h-8 grow items-center rounded border border-[#1c1f21] bg-[#232729] pr-2 pl-[7px]">
          <Shield size={17} strokeWidth={1.9} className="mr-3" />
          <File size={15} strokeWidth={2} className="mr-[10px]" />
          <p className="grow text-[15px] text-[#a0a3a5]">
            <span className="text-[#eff0f1]">localhost</span>:40080/vnc.html?autoconnect=1&amp;autoscale=1&amp;quality=3
          </p>
          <button aria-label="Bookmark">
            <Star size={17} strokeWidth={1.8} />
          </button>
        </div>
        <button aria-label="Save to Pocket" className="mr-[21px]">
          <svg width="15" height="14" viewBox="0 0 15 14" fill="none" stroke="#eff0f1" strokeWidth="1.400" aria-hidden="true">
            <path d="M2.200 1h10.600c.8 0 1.200.5 1.200 1.200V6a6.500 6.500 0 01-13 0V2.200C1 1.500 1.500 1 2.200 1z" />
            <path d="M4.500 5.200l3 2.800 3-2.800" strokeLinecap="round" />
          </svg>
        </button>
        <button aria-label="Menu" className="mr-4">
          <Menu size={16} strokeWidth={1.8} />
        </button>
      </div>
      <div className="h-[19px] border-t border-[#1e2224] bg-[#282828]" />
    </div>
  );
}

const Terminal = ({ size }: { size: number }) => (
  <svg width={size} height={size} viewBox="0 0 40 40" aria-hidden="true">
    <rect x="1.500" y="1.500" width="37" height="37" rx="4" fill="#4c4c48" stroke="#74746e" strokeWidth="3" />
    <rect x="5" y="5" width="30" height="27" fill="#300608" />
    <path d="M7 7h12v11H7zM21 7h12v11H21zM7 20h12v10H7zM21 20h12v10H21z" fill="#8c1219" />
    <path d="M7 7h12v4H7zM21 7h12v4H21z" fill="#b0444a" />
  </svg>
);

const Diamond = () => (
  <svg width="22" height="22" viewBox="0 0 22 22" aria-hidden="true">
    <path d="M11 0l11 10-11 12L0 11z" fill="#9d8bd0" />
    <path d="M11 0l11 10-11 2L0 11z" fill="#c3b6ea" />
    <path d="M11 12v10L0 11z" fill="#7f70b4" />
    <path d="M8 13l6-7 1 1-6 7z" fill="#eee8ff" />
  </svg>
);

function Taskbar() {
  return (
    <footer className={`flex h-[27px] shrink-0 items-center overflow-hidden border-t border-b-2 border-t-[#a8a8a8] border-b-[#5a565a] bg-linear-to-b from-[#5c5c5c] via-[#0c0c0c] via-60% to-[#3a3a3a] pl-1 whitespace-nowrap ${qt}`}>
      <button aria-label="Start menu" className="mr-1.5">
        <svg width="28" height="22" viewBox="0 0 28 22" fill="#b8bab8" aria-hidden="true">
          <path d="M0 12L20 0l7 20h-3l-5-12L9 21l5-12-11 9 8-9z" />
        </svg>
      </button>
      <button aria-label="File manager" className="mr-[7px]">
        <svg width="18" height="22" viewBox="0 0 18 22" aria-hidden="true">
          <rect x="1" y="1" width="16" height="20" rx="2" fill="#e2e2de" stroke="#b0b0b0" />
          <path d="M3.500 4.500h11v4h-11zM3.500 10h11v4h-11zM3.500 15.500h11v4h-11z" fill="#deded9" stroke="#8a8a86" />
          <path d="M7 6.500h4M7 12h4M7 17.500h4" stroke="#666" strokeWidth="1.200" />
        </svg>
      </button>
      <button aria-label="Web browser" className="mr-2">
        <Diamond />
      </button>
      <button aria-label="Show desktop" className="mr-[9px]">
        <svg width="21" height="20" viewBox="0 0 21 20" aria-hidden="true">
          <path d="M.5 2.500h14v11H.5z" fill="#eceef0" stroke="#909aa8" />
          <path d="M0 1h15v2.500H0z" fill="#3e74c0" />
          <path d="M7.500 8.500h13v10h-13z" fill="#f2f4f4" stroke="#9aa0a4" />
          <path d="M7 7h14v2H7z" fill="#7a9cc4" />
        </svg>
      </button>
      <div className="flex h-6">
        <button className="w-[42px] border border-white bg-[#5688b8] text-[9px] text-white italic">RViz</button>
        {[2, 3, 4].map((n) => (
          <button key={n} aria-label={`Desktop ${n}`} className="w-11 border-r border-[#1a1a1a] bg-[#9b9b93]" />
        ))}
      </div>
      <button className="ml-[5px] flex h-6 w-[149px] items-center gap-0.5 border border-white bg-[#dcd8d4] pl-0.5 text-[14px] text-[#202020]">
        <Terminal size={18} />
        [root@cc76061...
      </button>
      <button className="ml-[3px] flex h-6 w-[149px] items-center border border-[#f4f4f4] bg-[#c2bdb9] text-[14px] text-[#202020]">
        <span className="w-[21px] text-[8px] text-white italic">RViz</span>
        mapping.rviz* -...
      </button>
      <span className="grow" />
      <svg width="36" height="22" viewBox="0 0 36 22" aria-hidden="true">
        <path d="M0 0h36v22H0z" fill="#000" />
        <path d="M0 22v-6l3-1 3 1 4-2 3 2 5-1 4 1 3-2 5 2 3-1 3 1v6z" fill="#008400" />
      </svg>
      <svg width="18" height="22" viewBox="0 0 18 22" className="mr-2 ml-1.5" aria-hidden="true">
        <path d="M1 1l15 9L5 21c-4 0-4-3-3-6z" fill="#d83020" />
        <path d="M2 2l9 6-6 4z" fill="#f87858" />
      </svg>
      <time className="mr-1.5 text-[13px] text-white">13:49</time>
      <Diamond />
      <button aria-label="Log out" className="mr-1 ml-1">
        <svg width="22" height="23" viewBox="0 0 22 23" aria-hidden="true">
          <path d="M7 1h14v21H7z" fill="#20281e" stroke="#888" />
          <path d="M8 2l8 3v17l-8-2z" fill="#c8c8c2" />
          <path d="M0 9h5V5l6 6-6 6v-4H0z" fill="#d82418" stroke="#7c1008" />
        </svg>
      </button>
    </footer>
  );
}

export default function App() {
  return (
    <div className="relative flex h-screen flex-col overflow-hidden bg-black">
      <TopBar />
      <Browser />
      <div className="relative flex min-h-0 flex-1 flex-col pt-[3px]">
        <div className="absolute top-3 left-[11px] w-[53px] overflow-hidden">
          <div className="ml-[25px] w-10">
            <Terminal size={40} />
          </div>
          <div className={`mt-1.5 h-6 bg-[#4b6c8e] pl-[3px] text-[16px] leading-6 text-white ${qt}`}>Terminal</div>
        </div>
        <RvizWindow />
        <button aria-label="noVNC controls" className="absolute top-[367px] left-0 flex h-[50px] w-3.5 items-center justify-center rounded-r-md bg-[#4a5977]">
          <svg width="12" height="46" viewBox="0 0 12 46" aria-hidden="true">
            <path d="M3 6h7M3 10h7M3 14h7M3 18h7M3 30h7M3 34h7M3 38h7M3 42h7" stroke="#75829b" strokeWidth="2" strokeDasharray="2 2.500" />
            <path d="M3 19.500v7l5-3.500z" fill="#fff" />
          </svg>
        </button>
        <div role="tooltip" className={`absolute top-[362px] left-1.5 flex h-[31px] items-center rounded-md bg-[#3c4143]/80 px-3 text-[15px] text-[#eee] ${web}`}>
          进行图形截图
        </div>
      </div>
      <Taskbar />
    </div>
  );
}
